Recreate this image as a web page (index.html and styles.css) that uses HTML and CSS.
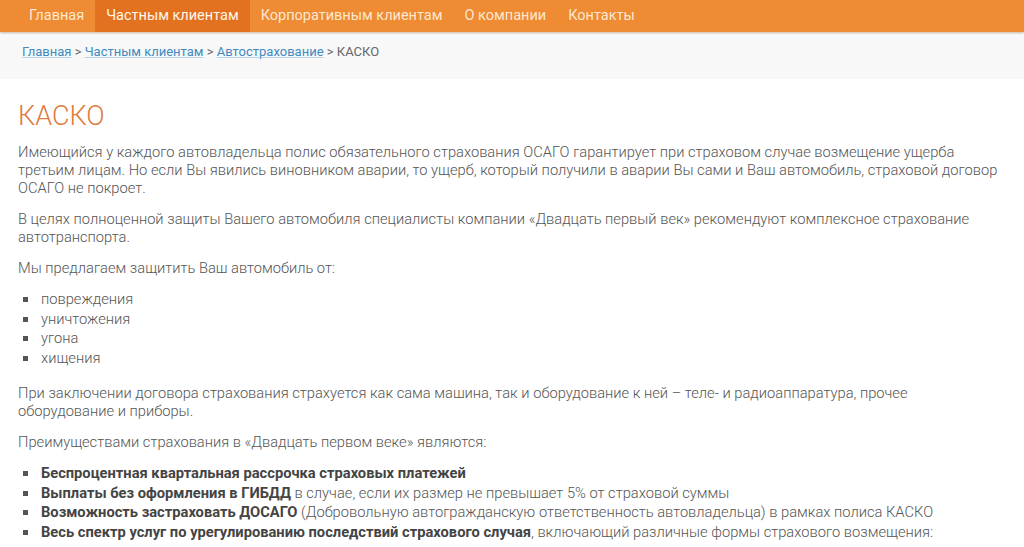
FILE: index.html
```html
<!DOCTYPE html>
<html lang="ru">
<head>
<meta charset="utf-8">
<title>КАСКО</title>
<link rel="stylesheet" href="styles.css">
</head>
<body>
<nav class="topnav">
  <a class="nav-item" href="#">Главная</a>
  <a class="nav-item active" href="#">Частным клиентам</a>
  <a class="nav-item" href="#">Корпоративным клиентам</a>
  <a class="nav-item" href="#">О компании</a>
  <a class="nav-item" href="#">Контакты</a>
</nav>
<div class="crumbs">
  <a href="#">Главная</a> &gt; <a href="#">Частным клиентам</a> &gt; <a href="#">Автострахование</a> &gt; КАСКО
</div>
<main class="content">
  <h1 class="title">КАСКО</h1>
  <p>Имеющийся у каждого автовладельца полис обязательного страхования ОСАГО гарантирует при страховом случае возмещение ущерба третьим лицам. Но если Вы явились виновником аварии, то ущерб, который получили в аварии Вы сами и Ваш автомобиль, страховой договор ОСАГО не покроет.</p>
  <p>В целях полноценной защиты Вашего автомобиля специалисты компании «Двадцать первый век» рекомендуют комплексное страхование автотранспорта.</p>
  <p>Мы предлагаем защитить Ваш автомобиль от:</p>
  <ul class="list">
    <li>повреждения</li>
    <li>уничтожения</li>
    <li>угона</li>
    <li>хищения</li>
  </ul>
  <p>При заключении договора страхования страхуется как сама машина, так и оборудование к ней – теле- и радиоаппаратура, прочее оборудование и приборы.</p>
  <p>Преимуществами страхования в «Двадцать первом веке» являются:</p>
  <ul class="list">
    <li><b>Беспроцентная квартальная рассрочка страховых платежей</b></li>
    <li><b>Выплаты без оформления в ГИБДД</b> в случае, если их размер не превышает 5% от страховой суммы</li>
    <li><b>Возможность застраховать ДОСАГО</b> (Добровольную автогражданскую ответственность автовладельца) в рамках полиса КАСКО</li>
    <li><b>Весь спектр услуг по урегулированию последствий страхового случая</b>, включающий различные формы страхового возмещения:</li>
  </ul>
</main>
</body>
</html>
```
FILE: styles.css
```css
html, body {
  margin: 0;
  padding: 0;
  background: #fff;
}
body {
  font-family: Roboto, "Liberation Sans", sans-serif;
  color: #555;
  font-size: 14.7px;
  font-weight: 300;
  line-height: 18px;
}
.topnav {
  display: flex;
  height: 32px;
  padding-left: 18px;
  background: #ee8b33;
  box-shadow: 0 1px 2px rgba(120, 60, 10, 0.35);
  position: relative;
  z-index: 1;
}
.nav-item {
  display: flex;
  align-items: center;
  padding: 0 11px;
  color: #fde7cf;
  text-decoration: none;
  font-size: 14.5px;
  font-weight: 400;
}
.nav-item.active {
  background: #e2721f;
  color: #fff5ea;
}
.crumbs {
  background: #f8f8f8;
  height: 47px;
  padding: 11px 22px 0;
  box-sizing: border-box;
  font-size: 13px;
  font-weight: 400;
  color: #666;
}
.crumbs a {
  color: #3f8ac0;
  text-decoration: underline;
  text-decoration-color: #b8d4ea;
}
.content {
  padding: 0 18px;
}
.title {
  margin: 21px 0 11px;
  font-size: 27px;
  line-height: 32px;
  font-weight: 300;
  color: #e07a3e;
}
p {
  margin: 0 0 13px;
}
.list {
  margin: 0 0 16px;
  padding: 0 0 0 23px;
  list-style: none;
}
.list li {
  position: relative;
  line-height: 19.5px;
}
.list li::before {
  content: "";
  position: absolute;
  left: -18px;
  top: 7px;
  width: 5px;
  height: 5px;
  background: #555;
}
.list b {
  color: #444;
  font-weight: 700;
}
```
